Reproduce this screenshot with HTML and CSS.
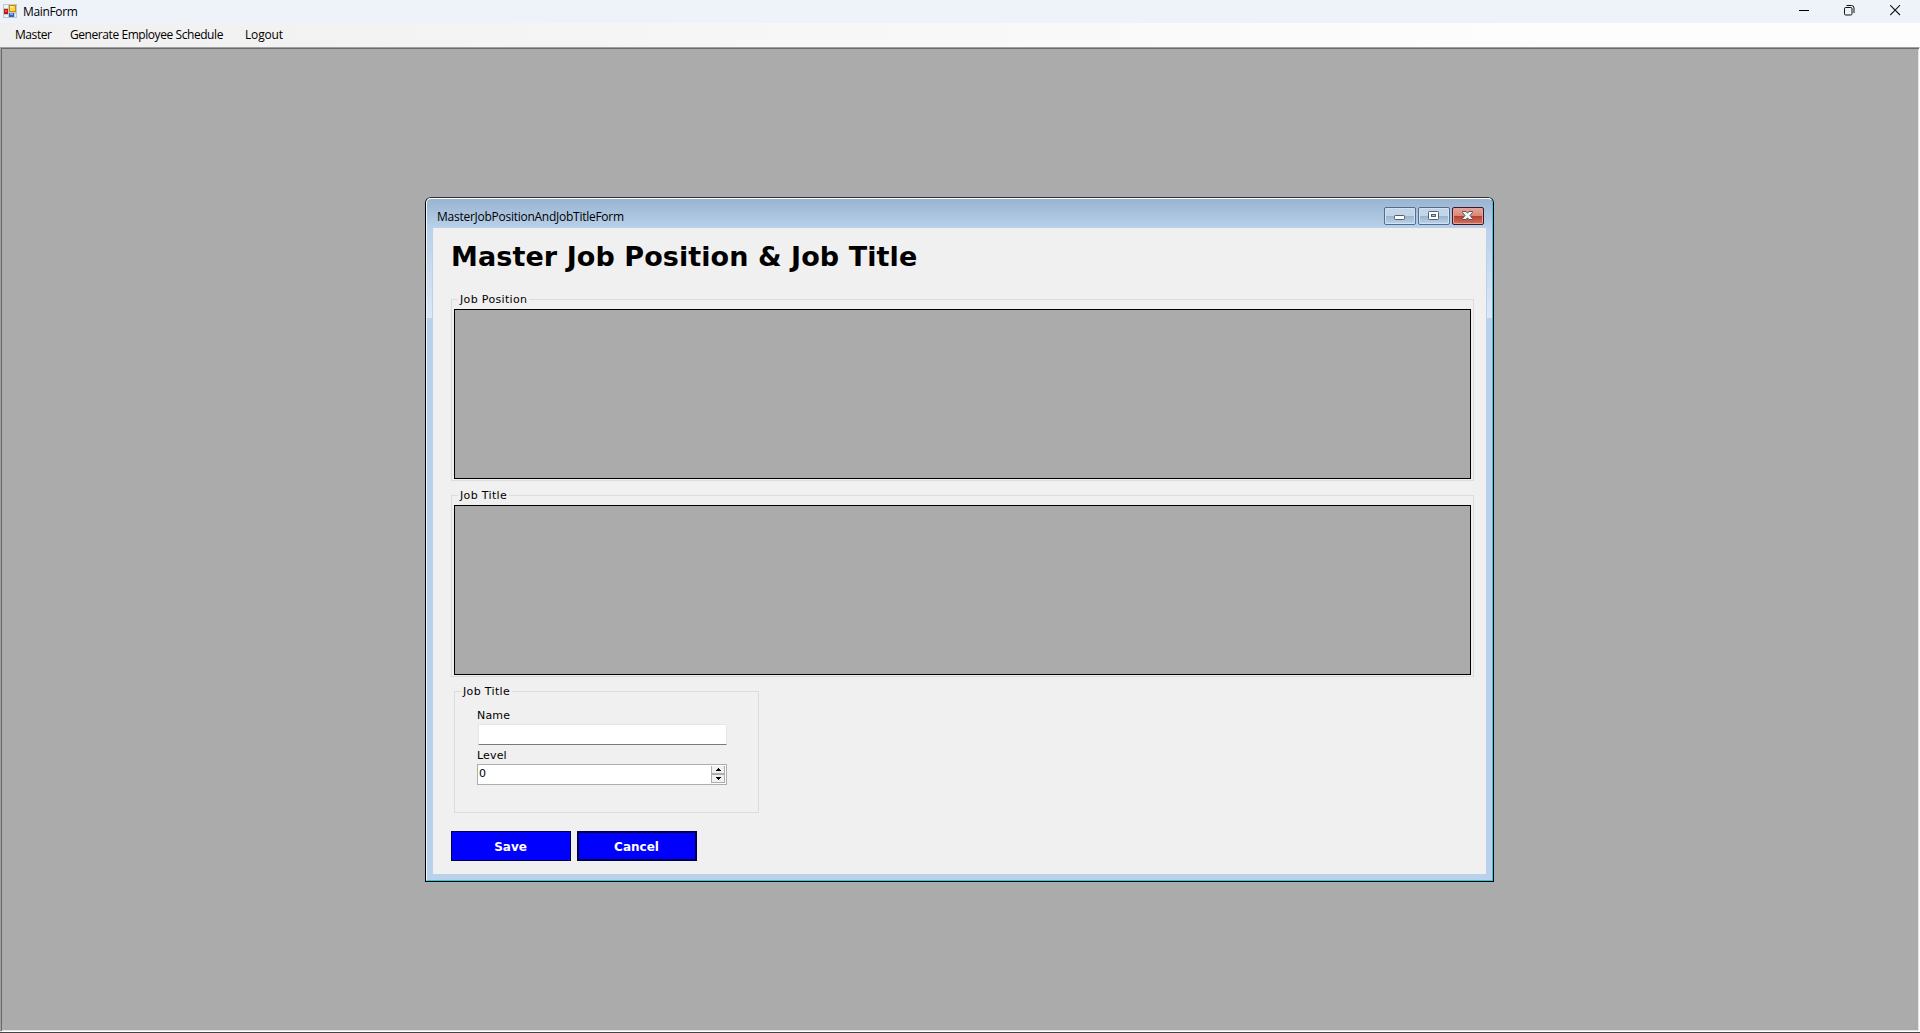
FILE: index.html
```html
<!DOCTYPE html>
<html lang="en">
<head>
<meta charset="utf-8">
<title>MainForm</title>
<link rel="stylesheet" href="styles.css">
</head>
<body>
<header class="titlebar">
  <svg class="app-icon" width="14" height="14" viewBox="0 0 14 14" shape-rendering="crispEdges">
    <path d="M0 0H14V14H0Z" fill="#c3c6ca"/>
    <path d="M1 1H5V4H1ZM1 11H5V13H1ZM12 10H13V13H12Z" fill="#eef3fa"/>
    <rect x="1" y="5" width="4" height="5" fill="#b71c12"/><rect x="2" y="6" width="2" height="2" fill="#ee5b42"/>
    <rect x="6" y="1" width="7" height="7" fill="#c98a08"/><rect x="7" y="2" width="5" height="5" fill="#ffd546"/><rect x="7" y="2" width="3" height="2" fill="#ffe98c"/>
    <rect x="6" y="9" width="5" height="4" fill="#2f63cf"/><rect x="7" y="9" width="3" height="2" fill="#74a4f5"/>
  </svg>
  <span class="app-name">MainForm</span>
  <div class="window-controls">
    <svg width="11" height="11" viewBox="0 0 11 11"><path d="M1 5.5H11" stroke="#000"/></svg>
    <svg width="11" height="11" viewBox="0 0 11 11" fill="none" stroke="#111"><rect x=".5" y="2.5" width="7.5" height="7.5" rx="1.2"/><path d="M2.5 .5H7.5Q10 .5 10 3V8"/></svg>
    <svg width="11" height="11" viewBox="0 0 11 11"><path d="M.2 .2L10 10M10 .2L.2 10" stroke="#111" stroke-width="1.1"/></svg>
  </div>
</header>
<nav class="menu">
  <span class="menu-master">Master</span>
  <span class="menu-generate">Generate Employee Schedule</span>
  <span class="menu-logout">Logout</span>
</nav>
<main class="workspace">
  <section class="child-window">
    <div class="frame">
      <div class="caption">
        <span class="caption-text">MasterJobPositionAndJobTitleForm</span>
        <div class="caption-buttons">
          <div class="caption-button"><svg width="30" height="16" viewBox="0 0 30 16"><rect x="9.5" y="7.5" width="10" height="4" rx=".8" fill="#fff" stroke="#535d70"/></svg></div>
          <div class="caption-button"><svg width="30" height="16" viewBox="0 0 30 16"><rect x="9.5" y="3.5" width="10" height="8" rx=".8" fill="#fff" stroke="#535d70"/><rect x="12.5" y="6.5" width="4" height="2" fill="#a8bfd6" stroke="#535d70"/></svg></div>
          <div class="caption-button close"><svg width="30" height="16" viewBox="0 0 30 16"><path d="M9.5 3.5H13L14.5 5.2L16 3.5H19.5V4.5L17 7.5L19.5 10.5V11.5H16L14.5 9.8L13 11.5H9.5V10.5L12 7.5L9.5 4.5Z" fill="#f5f5f5" stroke="#535666"/></svg></div>
        </div>
      </div>
      <div class="form">
        <h1>Master Job Position &amp; Job Title</h1>
        <section class="group grid-group">
          <h2>Job Position</h2>
          <div class="data-grid"></div>
        </section>
        <section class="group grid-group">
          <h2>Job Title</h2>
          <div class="data-grid"></div>
        </section>
        <section class="group details">
          <h2>Job Title</h2>
          <label>Name</label>
          <div class="textbox"></div>
          <label class="level">Level</label>
          <div class="number"><span>0</span>
            <div class="spinner">
              <div class="step"><svg width="5" height="3" viewBox="0 0 5 3" shape-rendering="crispEdges"><path d="M2 0H3V1H4V2H5V3H0V2H1V1H2Z"/></svg></div>
              <div class="step"><svg width="5" height="3" viewBox="0 0 5 3" shape-rendering="crispEdges"><path d="M0 0H5V1H4V2H3V3H2V2H1V1H0Z"/></svg></div>
            </div>
          </div>
        </section>
        <div class="actions">
          <button>Save</button>
          <button class="focused">Cancel</button>
        </div>
      </div>
    </div>
  </section>
</main>
<footer class="screen-edge"></footer>
</body>
</html>
```
FILE: styles.css
```css
* { box-sizing: border-box; }
body {
  margin: 0;
  height: 1033px;
  overflow: hidden;
  display: flex;
  flex-direction: column;
  background: #ababab;
  color: #000;
  font-family: "Open Sans", "Noto Sans", sans-serif;
  font-size: 12px;
}
svg { display: block; }
.titlebar {
  height: 23px;
  flex: none;
  display: flex;
  align-items: flex-start;
  padding: 4px 19px 0 3px;
  background: #eef3fa;
}
.app-name { margin-left: 6px; line-height: 16px; letter-spacing: -0.35px; }
.window-controls { margin-left: auto; display: flex; gap: 35px; padding-top: 1px; }
.menu {
  height: 24px;
  flex: none;
  display: flex;
  padding-left: 15px;
  line-height: 24px;
  background: linear-gradient(90deg, #f0f0f0, #fdfdfd 80%);
}
.menu span { white-space: nowrap; letter-spacing: -0.43px; }
.menu .menu-logout { letter-spacing: -0.15px; }
.menu-master { width: 55px; }
.menu-generate { width: 175px; }
.workspace {
  flex: 1;
  border: 1px solid;
  border-color: #a0a0a0 #fff #fff #a0a0a0;
  box-shadow: inset 1px 1px #696969, inset -1px -1px #e3e3e3;
  padding: 149px 0 0 424px;
}
.screen-edge { height: 1px; flex: none; background: #444; }
.child-window {
  width: 1069px;
  height: 685px;
  border: 1px solid #000;
  border-top-color: #303030;
  border-radius: 6px 6px 0 0;
  background: #b9d1ea;
}
.frame {
  height: 683px;
  border: 1px solid;
  border-color: #fff #2bc8ec #22cfe2 #f4f8fc;
  border-radius: 5px 5px 0 0;
  padding: 0 6px 6px;
  background:
    linear-gradient(#b9d1ea, #dce8f6) 0 29px / 5px 90px no-repeat,
    linear-gradient(#b9d1ea, #dce8f6) 1060px 29px / 5px 90px no-repeat,
    linear-gradient(#99b4d1, #b9d1ea) 0 0 / 100% 29px no-repeat,
    #b9d1ea;
}
.caption { height: 29px; display: flex; justify-content: space-between; padding: 8px 2px 0 4px; }
.caption-text { line-height: 19px; letter-spacing: -0.26px; }
.caption-buttons { display: flex; gap: 2px; }
.caption-button {
  width: 32px;
  height: 18px;
  border: 1px solid #566b8b;
  border-radius: 2px;
  box-shadow: inset 0 0 0 1px #d3e3f3;
  background: linear-gradient(#c3d5e8 0 8px, #98b3cf 8px, #bcd5ed);
}
.caption-button.close {
  border-color: #431422;
  box-shadow: inset 0 0 0 1px #e0a59c;
  background: linear-gradient(#e5a59b, #d98576 8px, #b83e28 8px, #d27360);
}
.form {
  height: 646px;
  padding: 10px 12px 0 18px;
  background: #f0f0f0;
  font-family: "DejaVu Sans", sans-serif;
  font-size: 11px;
}
h1 { margin: 0; height: 61px; font-size: 27px; line-height: 38px; letter-spacing: 0.08px; white-space: nowrap; }
.group { border: 1px solid #dcdcdc; }
h2 {
  width: max-content;
  margin: -8px 0 0 6px;
  padding: 0 2px;
  font-size: 11px;
  font-weight: 400;
  line-height: 16px;
  letter-spacing: 0.34px;
  background: #f0f0f0;
}
.grid-group { height: 182px; width: 1023px; margin-bottom: 14px; padding: 0 2px; }
.grid-group h2 { margin-left: 4px; }
.data-grid { height: 170px; margin-top: 1px; border: 1px solid #000; background: #ababab; }
.details { width: 305px; height: 122px; margin-left: 3px; }
label { display: block; height: 17px; margin: 7px 0 0 22px; line-height: 18px; letter-spacing: 0.15px; }
.textbox { width: 249px; height: 21px; margin: 0 0 0 23px; border: 1px solid #e6e6e6; border-bottom-color: #7a7a7a; border-radius: 1px; background: #fff; }
.level { margin-top: 1px; line-height: 19px; }
.number {
  width: 250px;
  height: 21px;
  margin: 1px 0 0 22px;
  border: 1px solid #abadb3;
  background: #fff;
  display: flex;
  justify-content: space-between;
  padding: 1px 1px 0 1px;
  line-height: 15px;
}
.spinner { width: 14px; height: 17px; border: 1px solid #adadad; border-top: 0; background: #adadad; display: grid; grid-template-rows: 7px 7px; gap: 2px; }
.step { display: grid; place-items: center; background: #f0f0f0; }
.actions { display: flex; gap: 6px; margin-top: 18px; }
button {
  width: 120px;
  height: 30px;
  padding: 1px 1px 0 0;
  border: 1px solid #00004a;
  background: #00f;
  color: #fff;
  font: bold 12px "DejaVu Sans", sans-serif;
}
.focused { border-width: 2px; }
```
